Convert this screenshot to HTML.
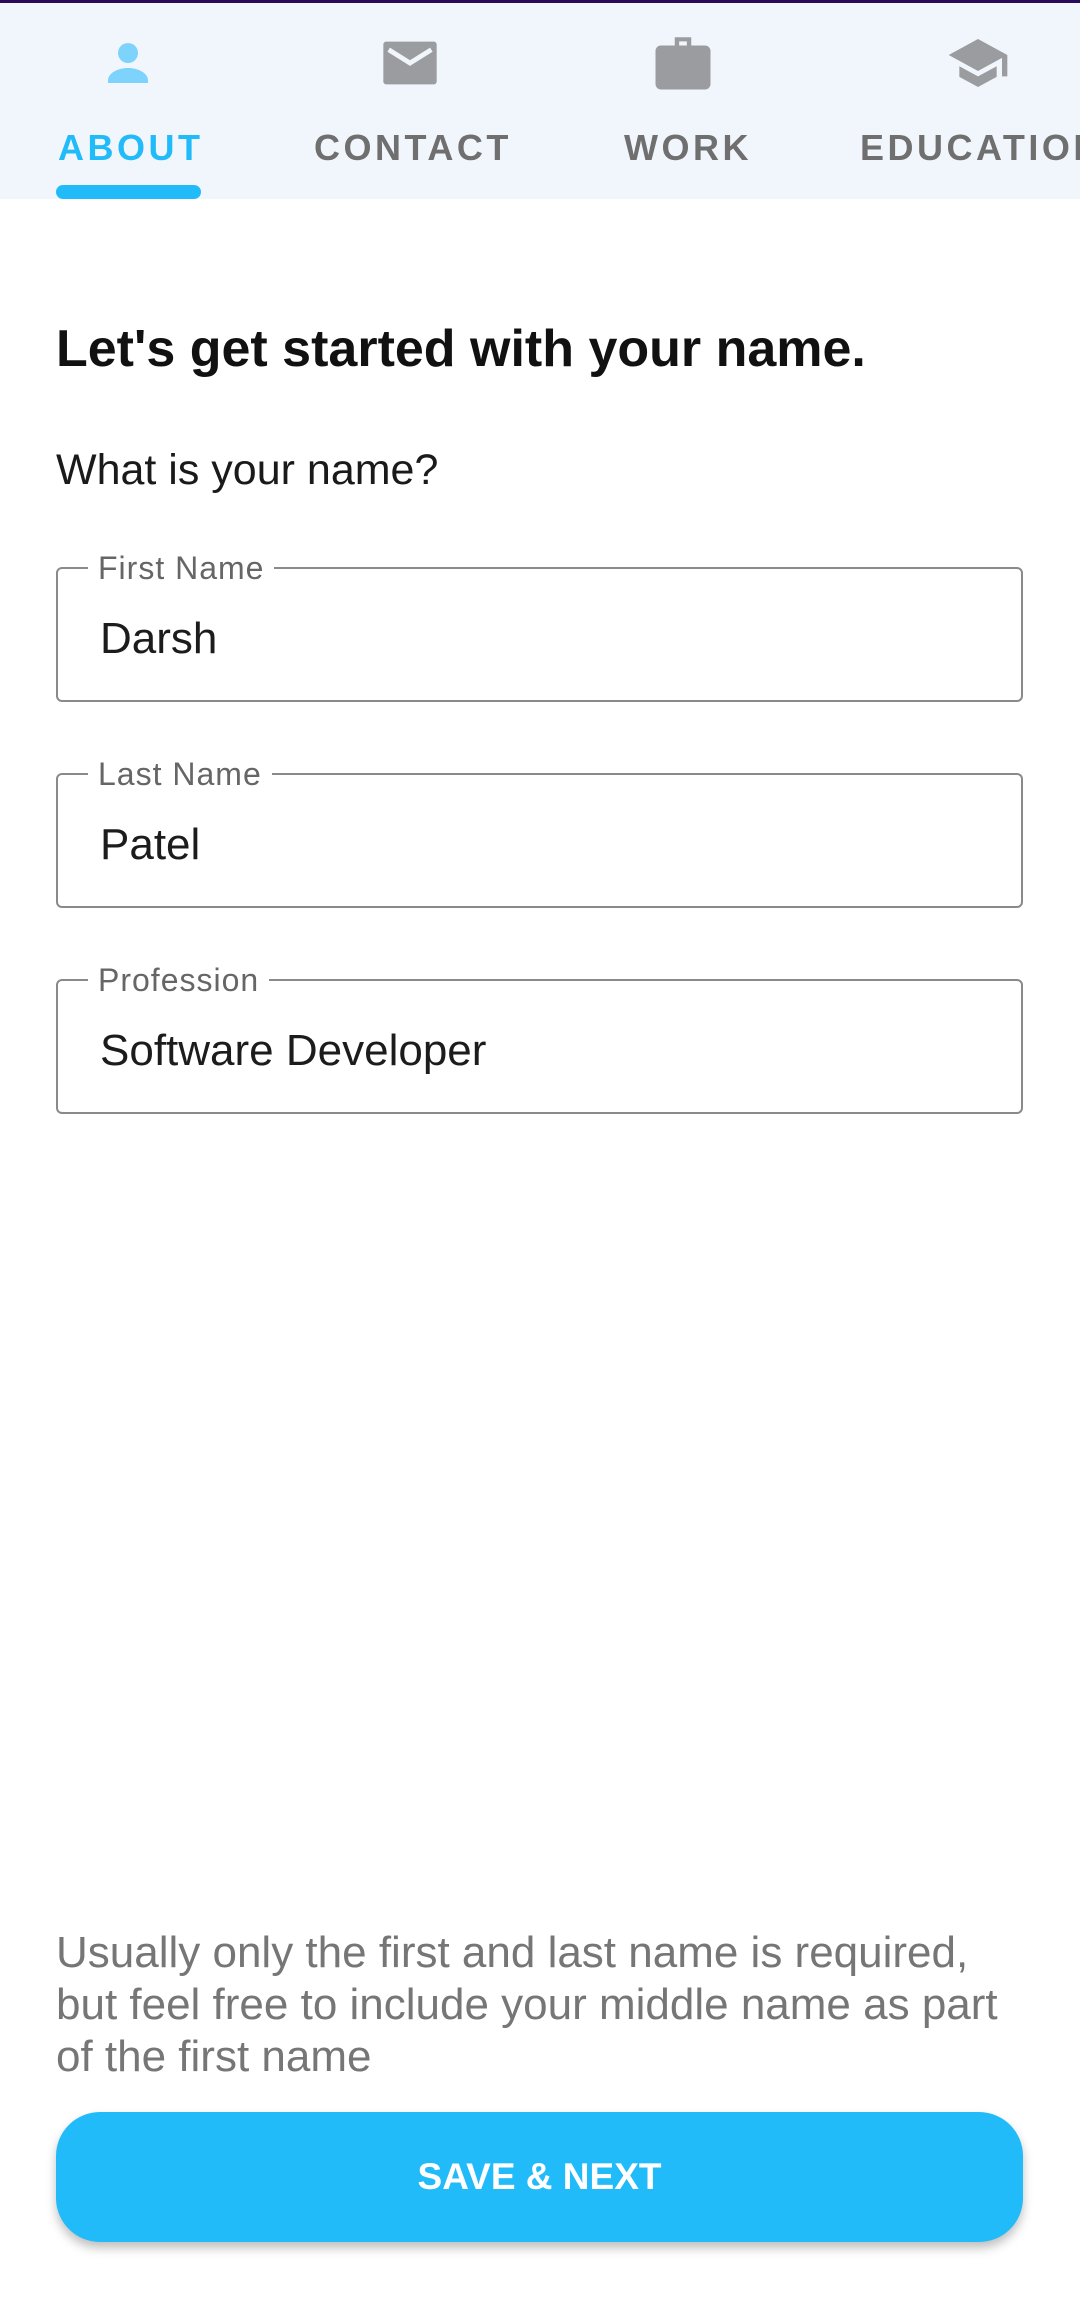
<!DOCTYPE html>
<html><head><meta charset="utf-8"><style>
*{margin:0;padding:0;box-sizing:border-box}
body{width:1080px;height:2299px;background:#fff;position:relative;overflow:hidden;font-family:"Liberation Sans",sans-serif}
.abs{position:absolute;white-space:nowrap}
.tabs{position:absolute;left:0;top:0;width:1080px;height:199px;background:#f1f6fd;border-top:3px solid #2a0a5a}
.tab{position:absolute;top:122px;font-size:36px;font-weight:bold;letter-spacing:3.5px;color:#6f6f6f;line-height:46px}
.field{position:absolute;left:56px;width:967px;height:135px;border:2px solid #8a8a8a;border-radius:6px}
.lab{position:absolute;left:30px;top:-22px;background:#fff;padding:0 10px;font-size:32px;color:#666;letter-spacing:1px;line-height:42px}
.val{position:absolute;left:42px;top:43px;font-size:44px;color:#1c1c1c;line-height:54px}
.help{position:absolute;left:56px;top:1927px;font-size:44px;line-height:52px;color:#767676;white-space:nowrap}
.btn{position:absolute;left:56px;top:2112px;width:967px;height:130px;border-radius:44px;background:#22bbf9;box-shadow:0 6px 10px rgba(0,0,0,.25);color:#fff;font-weight:bold;font-size:37px;text-align:center;line-height:130px}
</style></head><body>
<div class="tabs">
<svg class="abs" style="left:98px;top:30px" width="60" height="60" viewBox="0 0 24 24"><circle cx="12" cy="8" r="4" fill="#7dd3fc"/><path d="M4 20v-1c0-3 4-5 8-5s8 2 8 5v1z" fill="#7dd3fc"/></svg>
<svg class="abs" style="left:376px;top:28px" width="68" height="64" viewBox="0 0 24 24"><path d="M3 4h18a1 1 0 0 1 1 1v14a1 1 0 0 1-1 1H3a1 1 0 0 1-1-1V5a1 1 0 0 1 1-1z" fill="#9a9ca0"/><path d="M4 7l8 5 8-5" fill="none" stroke="#f1f6fd" stroke-width="1.8"/></svg>
<svg class="abs" style="left:649px;top:26px" width="68" height="66" viewBox="0 0 24 24"><path d="M9 3h6v3h-1.6V4.5h-2.8V6H9z" fill="#9a9ca0"/><rect x="2" y="6" width="20" height="16" rx="2" fill="#9a9ca0"/></svg>
<svg class="abs" style="left:940px;top:28px" width="76" height="64" viewBox="0 0 24 24"><path d="M12 3L1 9l11 6 9-4.9V17h2V9z" fill="#9a9ca0"/><path d="M5 13.2v4L12 21l7-3.8v-4L12 17z" fill="#9a9ca0"/></svg>
<div class="tab" style="left:58px;color:#22bbf9">ABOUT</div>
<div class="tab" style="left:314px">CONTACT</div>
<div class="tab" style="left:624px">WORK</div>
<div class="tab" style="left:860px">EDUCATION</div>
<div class="abs" style="left:56px;top:182px;width:145px;height:14px;border-radius:7px;background:#22bbf9"></div>
</div>
<div class="abs" style="left:56px;top:318px;font-size:52px;font-weight:bold;color:#111;line-height:62px">Let's get started with your name.</div>
<div class="abs" style="left:56px;top:444px;font-size:43px;color:#1a1a1a;line-height:52px">What is your name?</div>
<div class="field" style="top:567px"><span class="lab">First Name</span><span class="val">Darsh</span></div>
<div class="field" style="top:773px"><span class="lab">Last Name</span><span class="val">Patel</span></div>
<div class="field" style="top:979px"><span class="lab">Profession</span><span class="val">Software Developer</span></div>
<div class="help">Usually only the first and last name is required,<br>but feel free to include your middle name as part<br>of the first name</div>
<div class="btn">SAVE &amp; NEXT</div>
</body></html>
